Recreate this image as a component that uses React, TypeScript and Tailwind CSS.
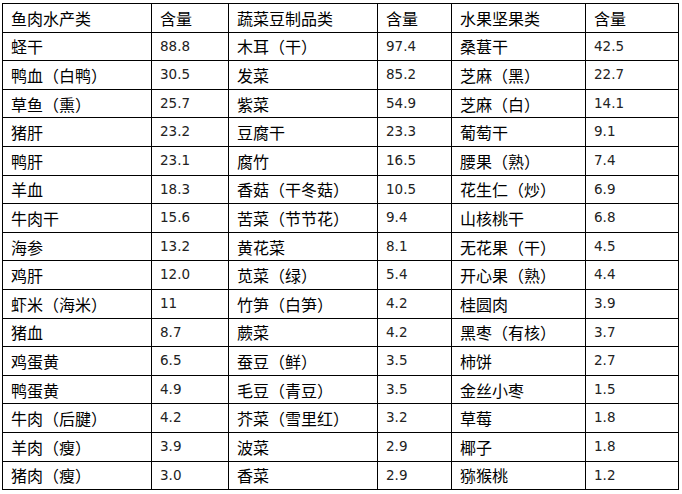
import React from "react";

const rows: [string, string, string, string, string, string][] = [
  ["蛏干", "88.8", "木耳（干）", "97.4", "桑葚干", "42.5"],
  ["鸭血（白鸭）", "30.5", "发菜", "85.2", "芝麻（黑）", "22.7"],
  ["草鱼（熏）", "25.7", "紫菜", "54.9", "芝麻（白）", "14.1"],
  ["猪肝", "23.2", "豆腐干", "23.3", "葡萄干", "9.1"],
  ["鸭肝", "23.1", "腐竹", "16.5", "腰果（熟）", "7.4"],
  ["羊血", "18.3", "香菇（干冬菇）", "10.5", "花生仁（炒）", "6.9"],
  ["牛肉干", "15.6", "苦菜（节节花）", "9.4", "山核桃干", "6.8"],
  ["海参", "13.2", "黄花菜", "8.1", "无花果（干）", "4.5"],
  ["鸡肝", "12.0", "苋菜（绿）", "5.4", "开心果（熟）", "4.4"],
  ["虾米（海米）", "11", "竹笋（白笋）", "4.2", "桂圆肉", "3.9"],
  ["猪血", "8.7", "蕨菜", "4.2", "黑枣（有核）", "3.7"],
  ["鸡蛋黄", "6.5", "蚕豆（鲜）", "3.5", "柿饼", "2.7"],
  ["鸭蛋黄", "4.9", "毛豆（青豆）", "3.5", "金丝小枣", "1.5"],
  ["牛肉（后腱）", "4.2", "芥菜（雪里红）", "3.2", "草莓", "1.8"],
  ["羊肉（瘦）", "3.9", "波菜", "2.9", "椰子", "1.8"],
  ["猪肉（瘦）", "3.0", "香菜", "2.9", "猕猴桃", "1.2"],
];

const header = ["鱼肉水产类", "含量", "蔬菜豆制品类", "含量", "水果坚果类", "含量"];

const cn = "border border-black pl-[8px] pr-1 text-[16px] text-black font-['Noto_Sans_CJK_SC','Noto_Sans',sans-serif] align-middle leading-none whitespace-nowrap";
const num = "border border-black pl-[8px] pr-1 text-[13.5px] text-[#222] font-['DejaVu_Sans',sans-serif] align-middle leading-none";

const App = () => {
  return (
    <div className="w-[682px] h-[494px] bg-white pt-[3px] pl-[2px]">
      <table className="border-collapse table-fixed w-[676px]">
        <colgroup>
          <col className="w-[149px]" />
          <col className="w-[77px]" />
          <col className="w-[149px]" />
          <col className="w-[74px]" />
          <col className="w-[134px]" />
          <col className="w-[93px]" />
        </colgroup>
        <tbody>
          <tr className="h-[28.6px]">
            {header.map((h, i) => (
              <td key={i} className={cn}>{h}</td>
            ))}
          </tr>
          {rows.map((r, i) => (
            <tr key={i} className="h-[28.6px]">
              <td className={cn}>{r[0]}</td>
              <td className={num}>{r[1]}</td>
              <td className={cn}>{r[2]}</td>
              <td className={num}>{r[3]}</td>
              <td className={cn}>{r[4]}</td>
              <td className={num}>{r[5]}</td>
            </tr>
          ))}
        </tbody>
      </table>
    </div>
  );
};

export default App;
